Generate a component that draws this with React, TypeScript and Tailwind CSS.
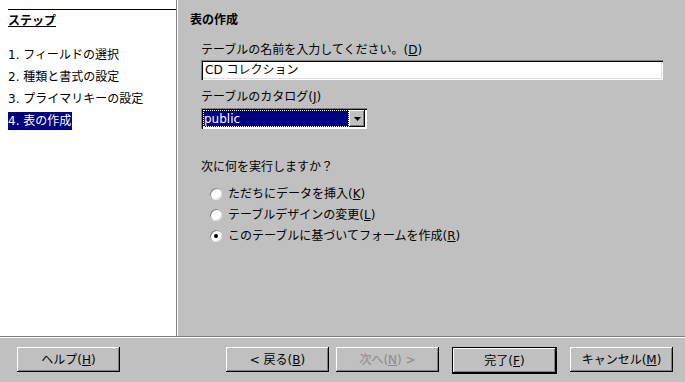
const FONT = { fontFamily: '"DejaVu Sans", "Noto Sans CJK JP", sans-serif' };

const STEPS = ['1. フィールドの選択', '2. 種類と書式の設定', '3. プライマリキーの設定', '4. 表の作成'];

function Mn({ c }: { c: string }) {
  return <span className="underline">{c}</span>;
}

function Btn({
  children,
  isDefault,
  disabled,
}: {
  children: React.ReactNode;
  isDefault?: boolean;
  disabled?: boolean;
}) {
  const bevel =
    'h-[25px] w-[103px] flex items-center justify-center bg-[#c0c0c0] shadow-[inset_-1px_-1px_0_#000,inset_1px_1px_0_#fff,inset_-2px_-2px_0_#808080]';
  if (isDefault) {
    return (
      <div className="border border-black">
        <div className={`${bevel} h-[23px] w-[101px] text-black`}>{children}</div>
      </div>
    );
  }
  return <div className={`${bevel} ${disabled ? 'text-[#8a8a8a]' : 'text-black'}`}>{children}</div>;
}

function Radio({ checked, children }: { checked?: boolean; children: React.ReactNode }) {
  return (
    <div className="flex h-[21px] items-center gap-[6px] pl-[9px]">
      <div className="relative h-[12px] w-[12px] rounded-full bg-white shadow-[inset_1px_1px_0_#808080,inset_-1px_-1px_0_#dfdfdf]">
        {checked && <div className="absolute left-[4px] top-[4px] h-[4px] w-[4px] rounded-full bg-black" />}
      </div>
      <span>{children}</span>
    </div>
  );
}

export default function App() {
  return (
    <div className="flex h-[382px] w-[685px] flex-col bg-[#c0c0c0] text-[12px] text-black" style={FONT}>
      <div className="flex h-[336px]">
        <aside className="w-[176px] bg-white pl-2 pt-[9px]">
          <div className="border-t border-black" />
          <div className="mt-[3px] flex h-[16px] items-center font-bold underline">ステップ</div>
          <div className="mt-[18px] flex flex-col gap-[6px]">
            {STEPS.map((s, i) => (
              <div key={s} className="flex h-[16px] items-center">
                <span className={i === 3 ? 'bg-[#000080] text-white pr-px' : ''}>{s}</span>
              </div>
            ))}
          </div>
        </aside>
        <div className="w-px bg-[#808080]" />
        <div className="w-px bg-white" />
        <main className="flex-1 pl-[12px] pt-[12px]">
          <div className="flex h-[16px] items-center font-bold">表の作成</div>
          <div className="pl-[11px]">
            <div className="mt-[14px] flex h-[16px] items-center">
              テーブルの名前を入力してください。(<Mn c="D" />)
            </div>
            <div className="mt-[2px] flex h-[20px] w-[462px] items-center bg-white pl-[4px] shadow-[inset_1px_1px_0_#808080,inset_2px_2px_0_#000,inset_-1px_-1px_0_#fff,inset_-2px_-2px_0_#dfdfdf]">
              CD コレクション
            </div>
            <div className="mt-[9px] flex h-[16px] items-center">
              テーブルのカタログ(<Mn c="J" />)
            </div>
            <div className="mt-[3px] flex h-[21px] w-[166px] items-stretch bg-white p-[2px] shadow-[inset_1px_1px_0_#808080,inset_2px_2px_0_#000]">
              <div className="flex flex-1 items-center bg-[#000080] pl-[1px] text-white outline outline-1 -outline-offset-1 outline-dotted outline-white">
                public
              </div>
              <div className="flex w-[16px] items-center justify-center bg-[#c0c0c0] shadow-[inset_-1px_-1px_0_#000,inset_1px_1px_0_#fff,inset_-2px_-2px_0_#808080]">
                <svg width="7" height="4" viewBox="0 0 7 4">
                  <path d="M0 0h7L3.5 4z" fill="#000" />
                </svg>
              </div>
            </div>
            <div className="mt-[30px] flex h-[16px] items-center">次に何を実行しますか？</div>
            <div className="mt-[8px] flex flex-col">
              <Radio>
                ただちにデータを挿入(<Mn c="K" />)
              </Radio>
              <Radio>
                テーブルデザインの変更(<Mn c="L" />)
              </Radio>
              <Radio checked>
                このテーブルに基づいてフォームを作成(<Mn c="R" />)
              </Radio>
            </div>
          </div>
        </main>
      </div>
      <div className="h-px bg-[#808080]" />
      <div className="h-px bg-white" />
      <footer className="flex pl-[17px] pt-[9px]">
        <Btn>
          ヘルプ(<Mn c="H" />)
        </Btn>
        <div className="ml-[106px]">
          <Btn>
            &lt; 戻る(<Mn c="B" />)
          </Btn>
        </div>
        <div className="ml-[7px]">
          <Btn disabled>
            次へ(<Mn c="N" />) &gt;
          </Btn>
        </div>
        <div className="ml-[13px]">
          <Btn isDefault>
            完了(<Mn c="F" />)
          </Btn>
        </div>
        <div className="ml-[13px]">
          <Btn>
            キャンセル(<Mn c="M" />)
          </Btn>
        </div>
      </footer>
    </div>
  );
}
